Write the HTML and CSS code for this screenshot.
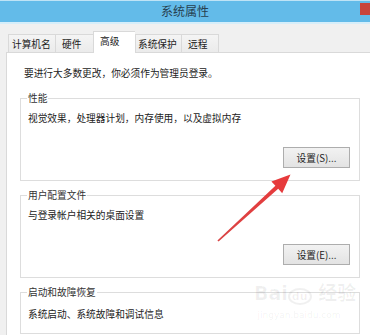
FILE: index.html
```html
<!DOCTYPE html>
<html lang="zh-CN">
<head>
  <meta charset="UTF-8" />
  <meta name="viewport" content="width=device-width, initial-scale=1.0" />
  <title>系统属性</title>
  <link rel="stylesheet" href="styles.css">
</head>
<body>
  <div class="window">
    <div class="title-bar">
      <span></span>
      <span class="title">系统属性</span>
      <span class="close-btn"></span>
    </div>
    <div class="title-edge"></div>
    <div class="tabs">
      <a href="#" class="tab tab-name">计算机名</a>
      <a href="#" class="tab tab-hw">硬件</a>
      <a href="#" class="tab tab-adv active">高级</a>
      <a href="#" class="tab tab-prot">系统保护</a>
      <a href="#" class="tab tab-remote">远程</a>
    </div>
    <div class="panel">
      <p class="notice">要进行大多数更改，你必须作为管理员登录。</p>
      <section class="group">
        <span class="group-title">性能</span>
        <p class="group-desc">视觉效果，处理器计划，内存使用，以及虚拟内存</p>
        <button class="btn">设置(S)...</button>
      </section>
      <section class="group">
        <span class="group-title">用户配置文件</span>
        <p class="group-desc">与登录帐户相关的桌面设置</p>
        <button class="btn">设置(E)...</button>
      </section>
      <section class="group group-last">
        <span class="group-title">启动和故障恢复</span>
        <p class="group-desc">系统启动、系统故障和调试信息</p>
      </section>
    </div>
  </div>

  <div class="watermark">
    <div class="wm-logo">Bai<span class="wm-paw">du</span> 经验</div>
    <div class="wm-url">jingyan.baidu.com</div>
  </div>

  <svg class="arrow" width="370" height="335" viewBox="0 0 370 335">
    <defs>
      <linearGradient id="arrowFill" x1="0" y1="1" x2="1" y2="0">
        <stop offset="0" stop-color="#d94545" />
        <stop offset="1" stop-color="#e8393b" />
      </linearGradient>
    </defs>
    <polygon fill="url(#arrowFill)"
      points="217.4,240.6 275.4,185.8 271.4,181.4 290.5,174.5 282.2,193.2 278.2,188.8 218.6,241.6" />
  </svg>
</body>
</html>
```

FILE: styles.css
```css
  :root {
    --title-blue: #63bbe9;
    --bg: #f0f0f0;
    --line: #d9d9d9;
    --group-line: #dddddd;
    --text: #222222;
  }
  * { box-sizing: border-box; }
  body {
    margin: 0;
    width: 370px;
    height: 335px;
    overflow: hidden;
    background: var(--bg);
    font-family: "Noto Sans CJK SC", "Microsoft YaHei", sans-serif;
    font-size: 9.7px;
    color: var(--text);
  }
  p { margin: 0; }

  .window {
    height: 335px;
    background: var(--bg);
    overflow: hidden;
  }
  .title-bar {
    height: 22px;
    background: var(--title-blue);
    border-top: 1px solid #bfe3f6;
    display: grid;
    grid-template-columns: 1fr auto 1fr;
    align-items: start;
  }
  .title {
    font-size: 12px;
    line-height: 22px;
    margin-top: -1px;
    color: #27404f;
  }
  .close-btn {
    justify-self: end;
    width: 10px;
    height: 12px;
    margin-top: 2px;
    background: #c8453c;
  }
  .title-edge {
    height: 2px;
    background: #d6eefa;
  }

  .tabs {
    display: flex;
    align-items: flex-end;
    padding: 6px 0 0 8px;
    height: 28px;
    position: relative;
    z-index: 1;
  }
  .tab {
    display: block;
    height: 18px;
    line-height: 18px;
    color: var(--text);
    text-decoration: none;
    background: linear-gradient(#f4f4f4, #ebebeb);
    border: 1px solid var(--line);
    border-right: none;
    border-bottom: none;
    padding-left: 6px;
    white-space: nowrap;
  }
  .tab-name { width: 47px; padding-left: 3px; }
  .tab-hw { width: 38px; }
  .tab-adv { width: 42px; }
  .tab-prot { width: 46px; padding-left: 2px; }
  .tab-remote { width: 38px; border-right: 1px solid var(--line); }
  .tab.active {
    height: 22px;
    line-height: 19px;
    margin-bottom: -1px;
    background: #ffffff;
  }
  .tab.active + .tab { border-left: 1px solid var(--line); }

  .panel {
    margin-left: 6px;
    height: 283px;
    background: #ffffff;
    border-top: 1px solid var(--line);
    border-left: 1px solid var(--line);
    padding: 13px 0 0 13px;
    overflow: hidden;
  }
  .notice {
    line-height: 14px;
    padding-left: 4px;
  }

  .group {
    width: 340px;
    margin-top: 18px;
    border: 1px solid var(--group-line);
    padding: 0 9px 12px 6px;
    display: flex;
    flex-direction: column;
  }
  .group + .group { margin-top: 14px; }
  .group-last .group-desc { margin-top: 8px; }
  .group-title {
    align-self: flex-start;
    margin-top: -8px;
    padding: 0 1px;
    line-height: 14px;
    background: #ffffff;
    color: #333333;
  }
  .group-desc {
    margin-top: 6px;
    line-height: 14px;
    padding-left: 1px;
  }
  .btn {
    align-self: flex-end;
    margin-top: 22px;
    width: 67px;
    height: 21px;
    padding: 0;
    font-family: inherit;
    font-size: 9.7px;
    color: var(--text);
    background: linear-gradient(#f2f2f2, #e3e3e3);
    border: 1px solid #adadad;
  }

  .watermark {
    position: absolute;
    left: 254px;
    top: 281px;
    width: 90px;
    color: rgba(0, 0, 0, 0.06);
    font-family: "DejaVu Sans", "Noto Sans CJK SC", sans-serif;
    text-align: center;
  }
  .wm-logo {
    font-size: 19px;
    font-weight: bold;
    line-height: 24px;
    white-space: nowrap;
  }
  .wm-paw {
    font-size: 11px;
    border: 2px solid rgba(0, 0, 0, 0.06);
    border-radius: 50%;
    padding: 0 2px;
  }
  .wm-url {
    font-size: 9px;
    line-height: 12px;
  }

  .arrow {
    position: absolute;
    left: 0;
    top: 0;
    pointer-events: none;
  }
```
